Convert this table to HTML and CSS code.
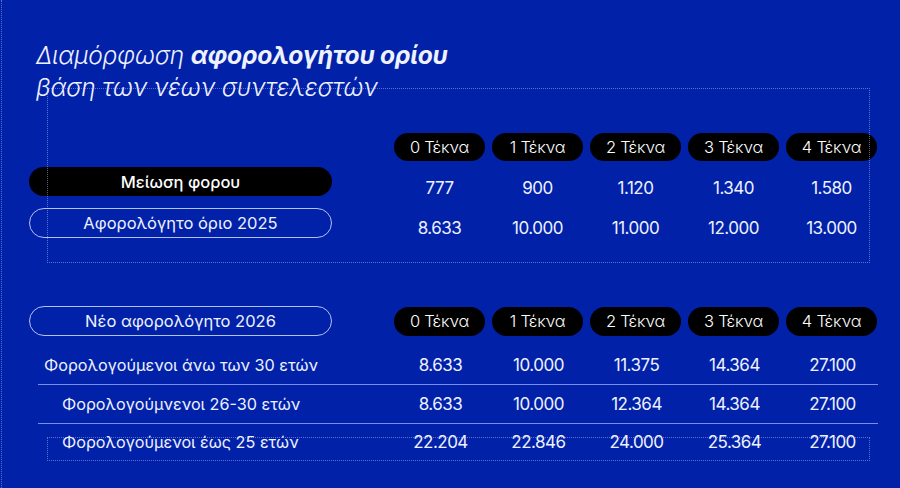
FILE: index.html
```html
<!DOCTYPE html>
<html lang="el">
<head>
<meta charset="utf-8">
<link rel="stylesheet" href="styles.css">
</head>
<body>
<div class="slide">
  <h1 class="title">Διαμόρφωση <b>αφορολογήτου ορίου</b><br>βάση των νέων συντελεστών</h1>

  <div class="grid sec1">
    <div></div>
    <div class="pill dark">0 Τέκνα</div>
    <div class="pill dark">1 Τέκνα</div>
    <div class="pill dark">2 Τέκνα</div>
    <div class="pill dark">3 Τέκνα</div>
    <div class="pill dark">4 Τέκνα</div>

    <div class="label"><span class="lpill black">Μείωση φορου</span></div>
    <div class="val">777</div>
    <div class="val">900</div>
    <div class="val">1.120</div>
    <div class="val">1.340</div>
    <div class="val">1.580</div>

    <div class="label"><span class="lpill outline">Αφορολόγητο όριο 2025</span></div>
    <div class="val tall">8.633</div>
    <div class="val tall">10.000</div>
    <div class="val tall">11.000</div>
    <div class="val tall">12.000</div>
    <div class="val tall">13.000</div>
  </div>

  <div class="grid sec2">
    <div class="label"><span class="lpill outline">Νέο αφορολόγητο 2026</span></div>
    <div class="pill dark">0 Τέκνα</div>
    <div class="pill dark">1 Τέκνα</div>
    <div class="pill dark">2 Τέκνα</div>
    <div class="pill dark">3 Τέκνα</div>
    <div class="pill dark">4 Τέκνα</div>
  </div>

  <div class="rows">
    <div class="row line">
      <div class="rlabel first">Φορολογούμενοι άνω των 30 ετών</div>
      <div class="val">8.633</div>
      <div class="val">10.000</div>
      <div class="val">11.375</div>
      <div class="val">14.364</div>
      <div class="val">27.100</div>
    </div>
    <div class="row line">
      <div class="rlabel">Φορολογούμνενοι 26-30 ετών</div>
      <div class="val">8.633</div>
      <div class="val">10.000</div>
      <div class="val">12.364</div>
      <div class="val">14.364</div>
      <div class="val">27.100</div>
    </div>
    <div class="row last">
      <div class="rlabel">Φορολογούμενοι έως 25 ετών</div>
      <div class="val">22.204</div>
      <div class="val">22.846</div>
      <div class="val">24.000</div>
      <div class="val">25.364</div>
      <div class="val">27.100</div>
    </div>
  </div>

  <div class="guide g1"></div>
  <div class="guide g2"></div>
</div>
</body>
</html>
```
FILE: styles.css
```css
* { box-sizing: border-box; }
html, body { margin: 0; padding: 0; }
body {
  width: 900px;
  height: 488px;
  overflow: hidden;
  background: #0121a8;
  font-family: Inter, "Noto Sans", sans-serif;
  color: #eef1ff;
}
.slide {
  position: relative;
  width: 900px;
  height: 488px;
  border-left: 1px dotted rgba(200, 210, 255, 0.45);
  margin-left: 1px;
}
.title {
  margin: 0;
  padding: 39px 0 0 34px;
  font-size: 24.6px;
  line-height: 32px;
  font-weight: 300;
  font-style: italic;
  letter-spacing: -0.2px;
}
.title b { font-weight: 700; }

.grid {
  display: grid;
  grid-template-columns: 358px repeat(5, 91px);
  column-gap: 7px;
  margin-left: 27px;
}
.sec1 {
  margin-top: 30px;
  grid-template-rows: 28px 35px 42px;
  align-items: end;
}
.sec1 .val { height: 34px; padding-top: 18px; }
.sec1 .val.tall { height: 35px; padding-top: 14px; }
.sec2 {
  margin-top: 68px;
  grid-template-rows: 30px;
  align-items: center;
}
.pill {
  display: flex;
  align-items: center;
  justify-content: center;
  border-radius: 14px;
  font-size: 16.5px;
  font-weight: 300;
  height: 28px;
  letter-spacing: -0.2px;
}
.sec2 .pill { height: 29px; border-radius: 15px; }
.dark { background: #000; color: #fff; }
.label { display: flex; align-items: center; }
.lpill {
  width: 303px;
  height: 30px;
  border-radius: 15px;
  display: flex;
  align-items: center;
  justify-content: center;
  font-size: 16.5px;
}
.black { background: #000; color: #fff; font-weight: 500; height: 29px; }
.outline { border: 1px solid rgba(210, 220, 255, 0.85); font-weight: 400; }
.val {
  display: flex;
  align-items: center;
  justify-content: center;
  font-size: 17px;
  font-weight: 400;
  letter-spacing: -0.5px;
  height: 29px;
}
.rows {
  margin-left: 36px;
  width: 840px;
  margin-top: 10px;
}
.row {
  display: grid;
  grid-template-columns: 350px repeat(5, 91px);
  column-gap: 7px;
  height: 39px;
  align-items: center;
}
.row.last { height: 36px; }
.row.line { border-bottom: 1px solid rgba(150, 170, 255, 0.8); }
.row .val { height: 100%; }
.rlabel {
  font-size: 16.2px;
  padding-left: 24px;
}
.rlabel.first { padding-left: 6px; }

.guide {
  position: absolute;
  border: 1px dotted rgba(200, 210, 255, 0.45);
  pointer-events: none;
}
.g1 { left: 45px; top: 88px; width: 823px; height: 175px; }
.g2 { left: 45px; top: 437px; width: 823px; height: 24px; }
```
